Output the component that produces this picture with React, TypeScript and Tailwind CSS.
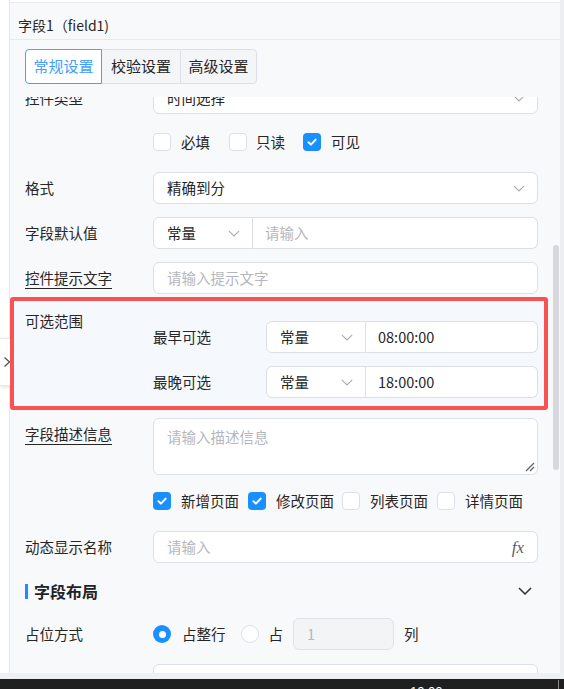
import React from "react";

const FONT = { fontFamily: '"Noto Sans CJK SC", "Noto Sans", sans-serif' };

function Chevron({ className = "" }: { className?: string }) {
  return (
    <svg width="12" height="7" viewBox="0 0 12 7" className={className}>
      <polyline points="0.8,0.8 6,6 11.2,0.8" fill="none" stroke="#a8abb2" strokeWidth="1.1" />
    </svg>
  );
}

function Check({ checked }: { checked?: boolean }) {
  if (checked) {
    return (
      <span className="w-[18px] h-[18px] rounded-[4px] bg-[#1890ff] flex items-center justify-center shrink-0">
        <svg width="12" height="12" viewBox="0 0 12 12">
          <path d="M2.4 6.3 4.9 8.6 9.7 3.6" stroke="white" strokeWidth="2" fill="none" strokeLinecap="round" strokeLinejoin="round" />
        </svg>
      </span>
    );
  }
  return <span className="w-[18px] h-[18px] rounded-[4px] border border-[#dcdfe6] bg-white shrink-0" />;
}

function Label({ children, underline, w = "w-[128px]" }: { children: React.ReactNode; underline?: boolean; w?: string }) {
  return (
    <div className={`${w} shrink-0 text-[14.5px] leading-[32px] text-[#262626]`}>
      <span className={underline ? "underline underline-offset-[4px] decoration-[#262626]" : ""}>{children}</span>
    </div>
  );
}

function Select({ value }: { value: string }) {
  return (
    <div className="flex-1 h-[32px] rounded-[6px] border border-[#dcdfe6] bg-white flex items-center justify-between pl-[13px] pr-[12px]">
      <span className="text-[14.5px] text-[#262626]">{value}</span>
      <Chevron />
    </div>
  );
}

function Combo({ value, placeholder }: { value?: string; placeholder?: string }) {
  return (
    <div className="flex-1 h-[32px] flex">
      <div className="w-[100px] shrink-0 rounded-l-[6px] border border-[#dcdfe6] bg-white flex items-center justify-between pl-[13px] pr-[12px]">
        <span className="text-[14.5px] text-[#262626]">常量</span>
        <Chevron />
      </div>
      <div className="flex-1 rounded-r-[6px] border border-l-0 border-[#dcdfe6] bg-white flex items-center pl-[12px]">
        {value ? (
          <span className="text-[14.5px] text-[#262626]">{value}</span>
        ) : (
          <span className="text-[14.5px] text-[#b4b7bd]">{placeholder}</span>
        )}
      </div>
    </div>
  );
}

function Input({ placeholder, children }: { placeholder: string; children?: React.ReactNode }) {
  return (
    <div className="flex-1 h-[32px] rounded-[6px] border border-[#dcdfe6] bg-white flex items-center justify-between pl-[13px] pr-[12px]">
      <span className="text-[14.5px] text-[#b4b7bd]">{placeholder}</span>
      {children}
    </div>
  );
}

export default function App() {
  return (
    <div className="relative w-[564px] h-[689px] flex flex-col bg-white overflow-hidden" style={FONT}>
      <div className="flex flex-1 min-h-0">
        <div className="w-[10px] shrink-0 bg-white border-r border-[#e6e8eb]" />
        <div className="flex-1 min-w-0 flex flex-col bg-[#f8f9fb] mt-[2px] border-t border-[#e8eaee]">
          {/* panel header */}
          <div className="h-[37px] shrink-0 border-b border-[#e8eaee] pl-[8px] pt-[9px]">
            <span className="text-[14px] leading-[22px] text-[#262626]">字段1（field1)</span>
          </div>

          {/* tabs */}
          <div className="shrink-0 pl-[15px] pt-[9px] pb-[13px]">
            <div className="flex h-[35px] w-[232px]">
              <div className="w-[77px] rounded-l-[4px] border border-[#4aa0ff] bg-white flex items-center justify-center text-[15px] text-[#409eff]">
                常规设置
              </div>
              <div className="w-[78px] border-y border-[#dcdfe6] bg-[#f4f5f7] flex items-center justify-center text-[15px] text-[#262626]">
                校验设置
              </div>
              <div className="w-[77px] rounded-r-[4px] border border-[#dcdfe6] bg-[#f4f5f7] flex items-center justify-center text-[15px] text-[#262626]">
                高级设置
              </div>
            </div>
          </div>

          {/* scrolled form body */}
          <div className="flex-1 min-h-0 overflow-hidden pl-[15px] pr-[22px]">
            <div className="mt-[-15px] flex flex-col">
              <div className="flex h-[32px]">
                <Label>控件类型</Label>
                <Select value="时间选择" />
              </div>

              <div className="mt-[12px] h-[32px] flex items-center pl-[128px] text-[14.5px] text-[#262626]">
                <Check />
                <span className="ml-[10px] mr-[19px]">必填</span>
                <Check />
                <span className="ml-[9px] mr-[18px]">只读</span>
                <Check checked />
                <span className="ml-[10px]">可见</span>
              </div>

              <div className="mt-[14px] flex h-[32px]">
                <Label>格式</Label>
                <Select value="精确到分" />
              </div>

              <div className="mt-[13px] flex h-[32px]">
                <Label>字段默认值</Label>
                <Combo placeholder="请输入" />
              </div>

              <div className="mt-[13px] flex h-[32px]">
                <Label underline>控件提示文字</Label>
                <Input placeholder="请输入提示文字" />
              </div>

              {/* selectable range */}
              <div className="relative z-10 mt-[3px] ml-[-15px] mr-[-10px] border-[4px] border-[#f85353] rounded-[3px] bg-[#f5f8fc] flex pl-[11px] pr-[6px]">
                <div className="w-[128px] shrink-0 pt-[9px] text-[14.5px] leading-[22px] text-[#262626]">可选范围</div>
                <div className="flex-1 pt-[20px] pb-[8px] flex flex-col gap-[13px]">
                  <div className="flex h-[32px]">
                    <Label w="w-[113px]">最早可选</Label>
                    <Combo value="08:00:00" />
                  </div>
                  <div className="flex h-[32px]">
                    <Label w="w-[113px]">最晚可选</Label>
                    <Combo value="18:00:00" />
                  </div>
                </div>
              </div>

              <div className="mt-[8px] flex">
                <Label underline>字段描述信息</Label>
                <div className="relative flex-1 h-[57px] rounded-[6px] border border-[#dcdfe6] bg-white pl-[13px] pt-[5px]">
                  <span className="text-[14.5px] leading-[22px] text-[#b4b7bd]">请输入描述信息</span>
                  <svg width="10" height="10" viewBox="0 0 10 10" className="absolute right-[2px] bottom-[2px]">
                    <line x1="1" y1="9" x2="9" y2="1" stroke="#606266" strokeWidth="1.2" />
                    <line x1="5" y1="9" x2="9" y2="5" stroke="#606266" strokeWidth="1.2" />
                  </svg>
                </div>
              </div>

              <div className="mt-[10px] h-[32px] flex items-center pl-[128px] text-[14.5px] text-[#262626]">
                <Check checked />
                <span className="ml-[10px] mr-[9px]">新增页面</span>
                <Check checked />
                <span className="ml-[10px] mr-[8px]">修改页面</span>
                <Check />
                <span className="ml-[10px] mr-[9px]">列表页面</span>
                <Check />
                <span className="ml-[10px]">详情页面</span>
              </div>

              <div className="mt-[14px] flex h-[32px]">
                <Label>动态显示名称</Label>
                <Input placeholder="请输入">
                  <span
                    className="italic text-[17px] text-[#5c5f66] leading-none pr-[1px]"
                    style={{ fontFamily: '"Liberation Serif", serif' }}
                  >
                    fx
                  </span>
                </Input>
              </div>

              {/* layout section title */}
              <div className="mt-[12px] h-[32px] flex items-center justify-between">
                <div className="flex items-center">
                  <span className="w-[3px] h-[15px] bg-[#1890ff]" />
                  <span className="ml-[6px] text-[16px] font-bold text-[#1f2329]">字段布局</span>
                </div>
                <svg width="14" height="8" viewBox="0 0 14 8" className="mr-[6px]">
                  <polyline points="1,1 7,7 13,1" fill="none" stroke="#303133" strokeWidth="1.5" />
                </svg>
              </div>

              <div className="mt-[11px] flex h-[32px]">
                <Label>占位方式</Label>
                <div className="flex items-center text-[14.5px] text-[#262626]">
                  <span className="w-[18px] h-[18px] rounded-full bg-[#1890ff] flex items-center justify-center">
                    <span className="w-[7px] h-[7px] rounded-full bg-white" />
                  </span>
                  <span className="ml-[11px] mr-[15px]">占整行</span>
                  <span className="w-[18px] h-[18px] rounded-full border border-[#dcdfe6] bg-white" />
                  <span className="ml-[10px] mr-[10px]">占</span>
                  <div className="w-[101px] h-[32px] rounded-[6px] border border-[#e0e2e7] bg-[#f3f4f6] flex items-center pl-[13px] text-[14.5px] text-[#b4b7bd]">
                    1
                  </div>
                  <span className="ml-[10px]">列</span>
                </div>
              </div>

              <div className="mt-[14px] flex h-[32px]">
                <Label>对齐方式</Label>
                <div className="flex-1 h-[32px] rounded-[6px] border border-[#dcdfe6] bg-white" />
              </div>
            </div>
          </div>
        </div>
        <div className="w-[4px] shrink-0 bg-[#eceef1]" />
      </div>

      <div className="h-[6px] shrink-0 bg-[#eef0f3]" />
      <div className="h-[10px] shrink-0 bg-[#1f1f1f] flex overflow-hidden">
        <span className="pl-[410px] pt-[6px] text-[13px] leading-none text-white" style={{ fontFamily: '"Liberation Sans", sans-serif' }}>
          10:00
        </span>
        <span className="ml-auto mr-[5px] mt-[1px] w-px bg-[#8a8a8a]" />
      </div>

      {/* collapse handle */}
      <div className="absolute left-0 top-[338px] w-[20px] h-[48px] bg-white rounded-r-[10px] border border-l-0 border-[#e6e8eb] shadow-[0_1px_4px_rgba(0,0,0,0.12)] flex items-center pl-[3px]">
        <svg width="8" height="12" viewBox="0 0 8 12">
          <polyline points="1.5,1.5 6.5,6 1.5,10.5" fill="none" stroke="#555" strokeWidth="1.3" />
        </svg>
      </div>

      {/* scrollbar thumb */}
      <div className="absolute left-[553px] top-[245px] w-[6px] h-[225px] rounded-full bg-[#d6d8dd]" />
    </div>
  );
}
